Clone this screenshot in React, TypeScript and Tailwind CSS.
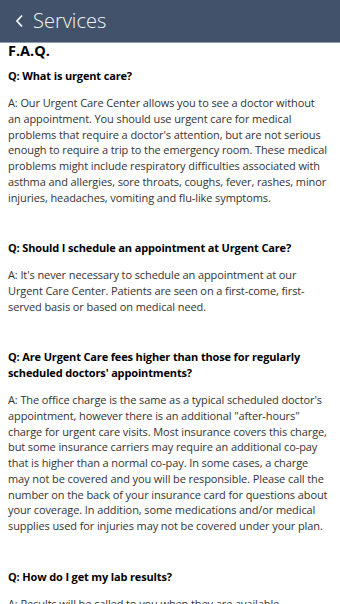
const faqs = [
  {
    q: "Q: What is urgent care?",
    a: "A: Our Urgent Care Center allows you to see a doctor without an appointment. You should use urgent care for medical problems that require a doctor's attention, but are not serious enough to require a trip to the emergency room. These medical problems might include respiratory difficulties associated with asthma and allergies, sore throats, coughs, fever, rashes, minor injuries, headaches, vomiting and flu-like symptoms.",
    aWrap: "pr-[6px]",
  },
  {
    q: "Q: Should I schedule an appointment at Urgent Care?",
    a: "A: It's never necessary to schedule an appointment at our Urgent Care Center. Patients are seen on a first-come, first-served basis or based on medical need.",
    aWrap: "pr-[6px]",
  },
  {
    q: "Q: Are Urgent Care fees higher than those for regularly scheduled doctors' appointments?",
    a: 'A: The office charge is the same as a typical scheduled doctor\'s\nappointment, however there is an additional "after-hours"\ncharge for urgent care visits. Most insurance covers this charge,\nbut some insurance carriers may require an additional co-pay\nthat is higher than a normal co-pay. In some cases, a charge\nmay not be covered and you will be responsible. Please call the\nnumber on the back of your insurance card for questions about\nyour coverage. In addition, some medications and/or medical\nsupplies used for injuries may not be covered under your plan.',
    aWrap: "whitespace-pre-line",
  },
  {
    q: "Q: How do I get my lab results?",
    a: "A: Results will be called to you when they are available.",
    aWrap: "",
  },
];

export default function App() {
  return (
    <div
      className="w-[340px] h-[604px] overflow-hidden bg-white"
      style={{ fontFamily: '"Open Sans", "Noto Sans", sans-serif' }}
    >
      <header className="h-[43px] bg-[#42526b] border-b border-[#8d9bb3] flex items-center pl-[15px] gap-[9px] text-[#f4f6fa]">
        <svg width="9" height="14" viewBox="0 0 9 14" fill="none">
          <path d="M7 1.5L2 7l5 5.5" stroke="currentColor" strokeWidth="1.8" />
        </svg>
        <span className="text-[20px] font-light leading-none">Services</span>
      </header>

      <main className="pl-2 pr-[6px]">
        <h1 className="text-[14.5px] font-bold text-black leading-[16px]">F.A.Q.</h1>
        {faqs.map((f, i) => (
          <section key={i} className={i === 0 ? "mt-[9px]" : "mt-[34.6px]"}>
            <p className="text-[11px] font-bold text-black leading-[15.8px] tracking-[-0.15px]">{f.q}</p>
            <p className={`mt-[11.2px] ${f.aWrap} text-[11px] text-[#333333] leading-[15.8px] tracking-[-0.1px]`}>
              {f.a}
            </p>
          </section>
        ))}
      </main>
    </div>
  );
}
